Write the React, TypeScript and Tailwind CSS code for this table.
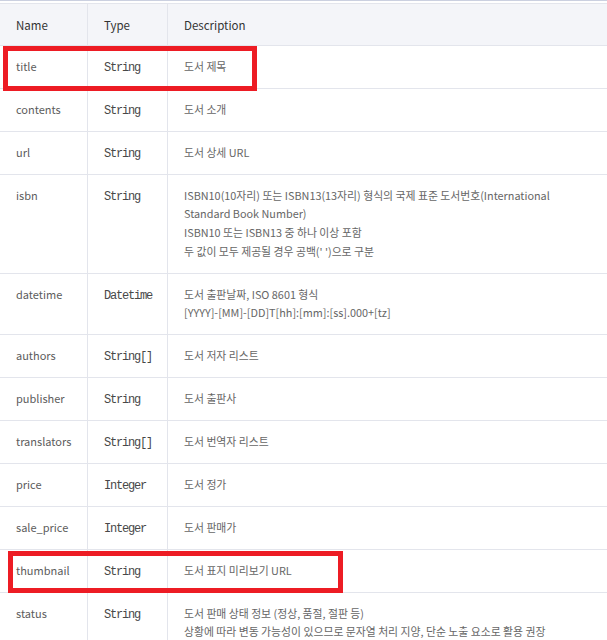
import React from "react";

type Row = { name: string; type: string; desc: string[]; h: string };

const rows: Row[] = [
  { name: "title", type: "String", desc: ["도서 제목"], h: "h-[43px]" },
  { name: "contents", type: "String", desc: ["도서 소개"], h: "h-[43px]" },
  { name: "url", type: "String", desc: ["도서 상세 URL"], h: "h-[43px]" },
  {
    name: "isbn",
    type: "String",
    desc: [
      "ISBN10(10자리) 또는 ISBN13(13자리) 형식의 국제 표준 도서번호(International",
      "Standard Book Number)",
      "ISBN10 또는 ISBN13 중 하나 이상 포함",
      "두 값이 모두 제공될 경우 공백(' ')으로 구분",
    ],
    h: "h-[99px]",
  },
  {
    name: "datetime",
    type: "Datetime",
    desc: ["도서 출판날짜, ISO 8601 형식", "[YYYY]-[MM]-[DD]T[hh]:[mm]:[ss].000+[tz]"],
    h: "h-[61px]",
  },
  { name: "authors", type: "String[]", desc: ["도서 저자 리스트"], h: "h-[43px]" },
  { name: "publisher", type: "String", desc: ["도서 출판사"], h: "h-[43px]" },
  { name: "translators", type: "String[]", desc: ["도서 번역자 리스트"], h: "h-[43px]" },
  { name: "price", type: "Integer", desc: ["도서 정가"], h: "h-[43px]" },
  { name: "sale_price", type: "Integer", desc: ["도서 판매가"], h: "h-[43px]" },
  { name: "thumbnail", type: "String", desc: ["도서 표지 미리보기 URL"], h: "h-[43px]" },
  {
    name: "status",
    type: "String",
    desc: [
      "도서 판매 상태 정보 (정상, 품절, 절판 등)",
      "상황에 따라 변동 가능성이 있으므로 문자열 처리 지양, 단순 노출 요소로 활용 권장",
    ],
    h: "h-[61px]",
  },
];

const sans = "font-['Noto_Sans_CJK_KR','Noto_Sans',sans-serif]";
const mono = "font-['Liberation_Mono','DejaVu_Sans_Mono',monospace]";

export default function App() {
  return (
    <div className={`relative w-[607px] h-[640px] overflow-hidden bg-white ${sans}`}>
      <div className="h-px bg-[#cbd0e0]" />
      <div className="h-[2px] bg-white" />
      <div className="border-t border-[#e3e5ec]">
        <div className="flex h-[42px] bg-[#f4f5f9] border-b border-[#e3e5ec] text-[11.5px] text-[#333]">
          <div className="w-[88px] border-r border-[#e3e5ec] pl-4 pt-[2px] flex items-center">Name</div>
          <div className="w-[80px] border-r border-[#e3e5ec] pl-4 pt-[2px] flex items-center">Type</div>
          <div className="flex-1 pl-4 pt-[2px] flex items-center">Description</div>
        </div>
        {rows.map((r) => (
          <div key={r.name} className={`flex ${r.h} border-b border-[#e3e5ec] text-[10.85px] leading-[18.7px]`}>
            <div className="w-[88px] border-r border-[#e3e5ec] pl-4 pt-[10.5px] text-[#5c5c5c] text-[11px]">
              {r.name}
            </div>
            <div className={`w-[80px] border-r border-[#e3e5ec] pl-4 pt-[12.5px] text-[#484848] text-[12px] tracking-[-1.2px] font-normal ${mono}`}>
              {r.type}
            </div>
            <div className="flex-1 pl-4 pt-[10.5px] text-[#666] whitespace-nowrap">
              {r.desc.map((d, i) => (
                <div key={i}>{d}</div>
              ))}
            </div>
          </div>
        ))}
      </div>
      <div className="absolute left-[3px] top-[46px] w-[254px] h-[45px] border-[5px] border-[#ed1c24]" />
      <div className="absolute left-[8px] top-[551px] w-[335px] h-[42px] border-[5px] border-[#ed1c24]" />
    </div>
  );
}
